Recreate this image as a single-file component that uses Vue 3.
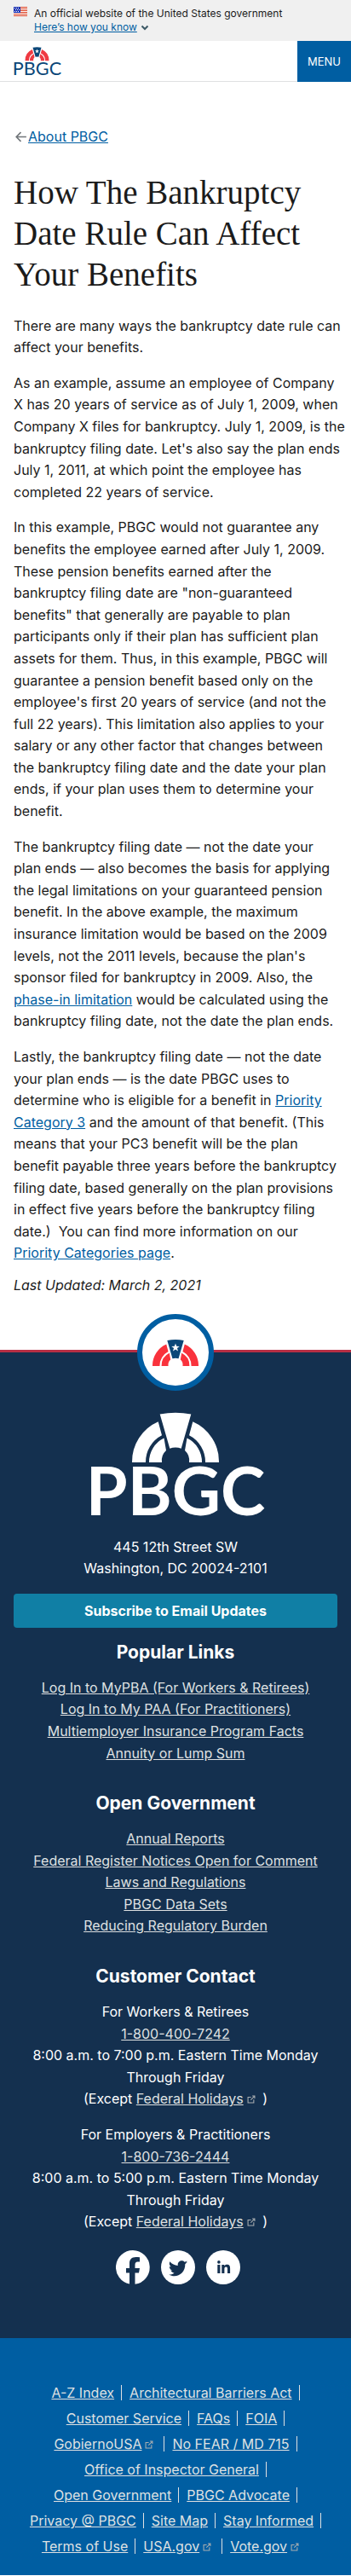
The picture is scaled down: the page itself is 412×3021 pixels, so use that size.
<script setup>
const keystone = 'M-18.3 -56.5 Q0 -60 18.3 -56.5 L6.7 -16.3 Q0 -18.5 -6.7 -16.3Z'
const star = 'M0 -50 L2.3 -43.6 L9 -43.4 L3.7 -39.3 L5.6 -32.8 L0 -36.6 L-5.6 -32.8 L-3.7 -39.3 L-9 -43.4 L-2.3 -43.6Z'
const ribs = [
  'M-51 0 A51 51 0 0 1 -20.3 -47.8 L-16 -31.8 A35 35 0 0 0 -35 0Z',
  'M-31 0 A31 31 0 0 1 -13.5 -28.5 L-11 -14 A16 16 0 0 0 -16 0Z',
  'M51 0 A51 51 0 0 0 20.3 -47.8 L16 -31.8 A35 35 0 0 1 35 0Z',
  'M31 0 A31 31 0 0 0 13.5 -28.5 L11 -14 A16 16 0 0 1 16 0Z'
]
const externalIcon = 'M11 7.5V12.5H1.5V3.5H6.5 M8.5 1.5H12.5V5.5 M12.5 1.5L6 8'

const popular = [
  'Log In to MyPBA (For Workers & Retirees)',
  'Log In to My PAA (For Practitioners)',
  'Multiemployer Insurance Program Facts',
  'Annuity or Lump Sum'
]
const government = [
  'Annual Reports',
  'Federal Register Notices Open for Comment',
  'Laws and Regulations',
  'PBGC Data Sets',
  'Reducing Regulatory Burden'
]
const contacts = [
  { who: 'For Workers & Retirees', phone: '1-800-400-7242', until: '7:00' },
  { who: 'For Employers & Practitioners', phone: '1-800-736-2444', until: '5:00' }
]
const siteLinks = [
  { label: 'A-Z Index' },
  { label: 'Architectural Barriers Act' },
  { label: 'Customer Service' },
  { label: 'FAQs' },
  { label: 'FOIA' },
  { label: 'GobiernoUSA', external: true },
  { label: 'No FEAR / MD 715' },
  { label: 'Office of Inspector General' },
  { label: 'Open Government' },
  { label: 'PBGC Advocate' },
  { label: 'Privacy @ PBGC' },
  { label: 'Site Map' },
  { label: 'Stay Informed' },
  { label: 'Terms of Use' },
  { label: 'USA.gov', external: true },
  { label: 'Vote.gov', external: true }
]
</script>

<template>
  <div class="page">
    <section class="banner" aria-label="Official website of the United States government">
      <svg class="flag" viewBox="0 0 16 11" aria-hidden="true">
        <path fill="#fff" d="M0 0h16v11H0z" />
        <path fill="#db3e1f" d="M0 0h16v1H0zM0 2h16v1H0zM0 4h16v1H0zM0 6h16v1H0zM0 8h16v1H0zM0 10h16v1H0z" />
        <path fill="#1e33b1" d="M0 0h8v7H0z" />
        <path fill="#fff" d="M1 1h1v1H1zM3 1h1v1H3zM5 1h1v1H5zM2 3h1v1H2zM4 3h1v1H4zM6 3h1v1H6zM1 5h1v1H1zM3 5h1v1H3zM5 5h1v1H5z" />
      </svg>
      <div class="banner-text">
        <p>An official website of the United States government</p>
        <button type="button" class="know">
          <span>Here’s how you know</span>
          <svg viewBox="0 0 10 10" aria-hidden="true"><path d="M1.5 3.5L5 7L8.5 3.5" fill="none" stroke="#3d5a66" stroke-width="2" /></svg>
        </button>
      </div>
    </section>

    <header class="header">
      <a href="#" class="brand" aria-label="PBGC home">
        <svg viewBox="-100 -59 200 124">
          <path v-for="d in ribs" :key="d" :d="d" fill="#ef3a42" />
          <path :d="keystone" fill="#0b4778" />
          <path :d="star" fill="#fff" />
          <text x="0" y="62" text-anchor="middle" class="wordmark" fill="#0b4778">PBGC</text>
        </svg>
      </a>
      <button type="button" class="menu">MENU</button>
    </header>

    <main class="main">
      <nav class="back" aria-label="Breadcrumb">
        <svg viewBox="0 0 16 16" aria-hidden="true"><path d="M14 8H3.5M8 3L3 8L8 13" fill="none" stroke="#71767a" stroke-width="1.5" /></svg>
        <a href="#">About PBGC</a>
      </nav>
      <h1>How The Bankruptcy Date Rule Can Affect Your Benefits</h1>
      <p>There are many ways the bankruptcy date rule can affect your benefits.</p>
      <p>As an example, assume an employee of Company X&nbsp;has 20 years of service as of July 1, 2009, when Company X files for bankruptcy. July 1, 2009, is the bankruptcy filing date. Let's also say the plan ends July 1, 2011, at which point the employee has completed 22 years of service.</p>
      <p>In this example, PBGC would not guarantee any benefits the employee earned after July 1, 2009. These pension benefits earned after the bankruptcy&nbsp;filing date are "non-guaranteed benefits"&nbsp;that generally are payable to plan participants only if their plan has sufficient plan assets for them. Thus, in this example, PBGC will guarantee a pension benefit based only on the employee's first 20 years of service (and not the full 22 years). This limitation also applies to your salary or any other factor that changes between the&nbsp;bankruptcy filing date and the date your plan ends, if your plan uses them to determine your benefit.</p>
      <p>The bankruptcy filing date — not the date your plan&nbsp;ends — also becomes the basis for applying the legal limitations on your guaranteed pension benefit. In the above example, the maximum insurance limitation would be based on the 2009 levels, not the 2011 levels, because the plan's sponsor filed for bankruptcy in 2009. Also, the <a href="#">phase-in limitation</a> would be calculated using the bankruptcy filing date, not the date the plan ends.</p>
      <p>Lastly, the bankruptcy filing date — not the date your&nbsp;plan ends — is the date PBGC uses to determine&nbsp;who is eligible for a benefit in <a href="#">Priority Category&nbsp;3</a> and the amount of that benefit. (This means that your PC3 benefit will be the plan benefit&nbsp;payable three years before the bankruptcy filing date, based generally on the plan provisions in&nbsp;effect five years before the bankruptcy filing date.)&nbsp;&nbsp;You can find more information on our <a href="#">Priority&nbsp;Categories page</a>.</p>
      <p class="updated">Last Updated: March 2, 2021</p>
    </main>

    <footer class="footer">
      <div class="seal">
        <svg viewBox="-51 -60 102 60" aria-hidden="true">
          <path v-for="d in ribs" :key="d" :d="d" fill="#f9323c" />
          <path :d="keystone" fill="#0b4778" />
          <path :d="star" fill="#fff" />
        </svg>
      </div>

      <div class="footer-main">
        <svg class="footer-logo" viewBox="-100 -59 200 124" role="img" aria-label="PBGC">
          <path v-for="d in ribs" :key="d" :d="d" fill="#fff" />
          <path :d="keystone" fill="#fff" />
          <text x="0" y="62" text-anchor="middle" class="wordmark strong" fill="#fff">PBGC</text>
        </svg>
        <address>445 12th Street SW<br />Washington, DC 20024-2101</address>
        <a href="#" class="subscribe">Subscribe to Email Updates</a>

        <section>
          <h2>Popular Links</h2>
          <ul>
            <li v-for="item in popular" :key="item"><a href="#">{{ item }}</a></li>
          </ul>
        </section>
        <section>
          <h2>Open Government</h2>
          <ul>
            <li v-for="item in government" :key="item"><a href="#">{{ item }}</a></li>
          </ul>
        </section>
        <section>
          <h2>Customer Contact</h2>
          <p v-for="c in contacts" :key="c.phone" class="contact">
            {{ c.who }}<br />
            <a href="#">{{ c.phone }}</a><br />
            8:00 a.m. to {{ c.until }} p.m. Eastern Time Monday Through Friday<br />
            (Except <a href="#">Federal Holidays</a><svg class="external" viewBox="0 0 14 14" aria-hidden="true"><path :d="externalIcon" /></svg> )
          </p>
        </section>

        <div class="social">
          <a href="#" aria-label="Facebook">
            <svg viewBox="0 0 40 40"><path fill="#fff" d="M20 0a20 20 0 0 1 2.500 39.800V26.500h4.500l1-5.500h-5.500V17c0-2 1-3.500 3-3.500h2.500V8.300c-1.500-.3-3-.4-4.500-.4-5 0-7.500 2.800-7.500 7.300V21H12v5.500h4V39.600A20 20 0 0 1 20 0z" /></svg>
          </a>
          <a href="#" aria-label="Twitter">
            <svg viewBox="0 0 40 40"><circle cx="20" cy="20" r="20" fill="#fff" /><path fill="#14304f" d="M31.500 13.300l-3.200 2.900c.3 8.500-6 14-12.500 14-2.500 0-4.500-.6-6.500-1.800 2.400.2 4.500-.4 6.300-1.700-2-.2-3.500-1.400-4.200-3.100.7.100 1.300.1 2-.1-2.200-.6-3.600-2.300-3.600-4.600.6.300 1.300.5 2 .5-2-1.500-2.600-3.900-1.400-6.100 2.400 2.800 5.600 4.500 9.400 4.700-.6-3.200 1.500-5.700 4.400-5.700 1.400 0 2.500.5 3.400 1.400 1.100-.2 2.100-.6 2.900-1.100-.3 1.100-1 1.900-1.900 2.500z" /></svg>
          </a>
          <a href="#" aria-label="LinkedIn">
            <svg viewBox="0 0 40 40"><circle cx="20" cy="20" r="20" fill="#fff" /><path fill="#14304f" d="M13.300 17h3.100v10h-3.100zM18.300 17h3v1.400c.6-1 1.600-1.700 3.100-1.700 3.100 0 3.700 2 3.700 4.800V27H25v-4.900c0-1.400-.1-2.700-1.700-2.700s-1.900 1.200-1.900 2.600v5h-3.100z" /><circle cx="14.900" cy="13.900" r="1.800" fill="#14304f" /></svg>
          </a>
        </div>
      </div>

      <nav class="site-links" aria-label="Site links">
        <ul>
          <li v-for="item in siteLinks" :key="item.label">
            <a href="#">{{ item.label }}</a>
            <svg v-if="item.external" class="external" viewBox="0 0 14 14" aria-hidden="true"><path :d="externalIcon" /></svg>
          </li>
        </ul>
      </nav>
    </footer>
  </div>
</template>

<style>
body {
  background: #fff;
}
</style>

<style scoped>
.page {
  color: #1b1b1b;
  font-family: Inter, "Liberation Sans", sans-serif;
  font-size: 16px;
  line-height: 1.6;
}
p, h1, h2, ul, address {
  margin: 0;
  padding: 0;
}
ul {
  list-style: none;
}
button {
  border: 0;
  padding: 0;
  font-family: inherit;
  cursor: pointer;
}
svg {
  display: block;
}
a {
  color: #005ea2;
}
.wordmark {
  font-family: Lato, sans-serif;
  font-size: 79px;
  font-weight: 400;
}
.wordmark.strong {
  font-weight: 700;
}

.banner {
  display: flex;
  gap: 8px;
  padding: 8px 16px;
  background: #f0f0f0;
  font-size: 12px;
  line-height: 16px;
}
.flag {
  width: 16px;
  height: 11px;
}
.know {
  display: flex;
  align-items: center;
  gap: 4px;
  background: none;
  color: #005ea2;
  font-size: 12px;
  line-height: 16px;
}
.know span {
  text-decoration: underline;
}
.know svg {
  width: 10px;
  height: 10px;
}

.header {
  display: flex;
  align-items: stretch;
  justify-content: space-between;
  height: 48px;
  box-sizing: border-box;
  box-shadow: inset 0 -1px #dfe1e2;
}
.brand {
  padding: 7px 16px;
}
.brand svg {
  width: 55px;
  height: 34px;
  overflow: visible;
}
.menu {
  padding: 0 12px;
  background: #005ea2;
  color: #fff;
  font-size: 13px;
}

.main {
  padding: 52px 4px 0 16px;
}
.main p {
  margin-bottom: 16px;
}
.back {
  display: flex;
  align-items: center;
}
.back svg {
  width: 17px;
  height: 17px;
}
h1 {
  margin: 28px 0 24px;
  font-family: "Liberation Serif", serif;
  font-size: 39px;
  font-weight: 400;
  line-height: 48px;
}
.main .updated {
  margin: -4px 0 0;
  font-style: italic;
}

.footer {
  margin-top: 20px;
  color: #fff;
  text-align: center;
  background: linear-gradient(#fff 42px, #b72f45 42px, #b72f45 45px, #14304f 45px);
}
.seal {
  display: flex;
  align-items: center;
  justify-content: center;
  width: 90px;
  height: 90px;
  margin: 0 auto;
  box-sizing: border-box;
  border: 6px solid #005ea2;
  border-radius: 50%;
  background: #fff;
}
.seal svg {
  width: 54px;
  height: 32px;
}
.footer-main {
  padding: 25px 16px 63px;
}
.footer-logo {
  width: 200px;
  height: 124px;
  margin: 0 auto 22px;
  overflow: visible;
}
address {
  font-style: normal;
}
.subscribe {
  display: block;
  margin-top: 16px;
  border-radius: 4px;
  background: #107fa5;
  color: #fff;
  font-weight: 700;
  line-height: 40px;
  text-decoration: none;
}
.footer ul a,
.contact a {
  color: #dfe1e2;
}
h2 {
  font-size: 21px;
  font-weight: 700;
  line-height: 32px;
}
section ul,
h2 + .contact {
  margin-top: 13px;
}
section + section {
  margin-top: 30px;
}
.subscribe + section {
  margin-top: 13px;
}
.contact + .contact {
  margin-top: 16px;
}
.external {
  display: inline-block;
  width: 10px;
  height: 10px;
  margin: 0 4px;
  fill: none;
  stroke: #a9aeb1;
  stroke-width: 1.5;
}
.social {
  display: flex;
  justify-content: center;
  gap: 13px;
  margin-top: 20px;
  padding-left: 6px;
}
.social svg {
  width: 40px;
  height: 40px;
}

.site-links {
  padding: 55px 28px 25px;
  background: #005ea2;
}
.site-links ul {
  display: flex;
  flex-wrap: wrap;
  justify-content: center;
  gap: 12px 9px;
}
.site-links li {
  padding-right: 8px;
  border-right: 1px solid #dfe1e2;
  line-height: 18px;
}
.site-links li:last-child {
  border-right: 0;
}
</style>
